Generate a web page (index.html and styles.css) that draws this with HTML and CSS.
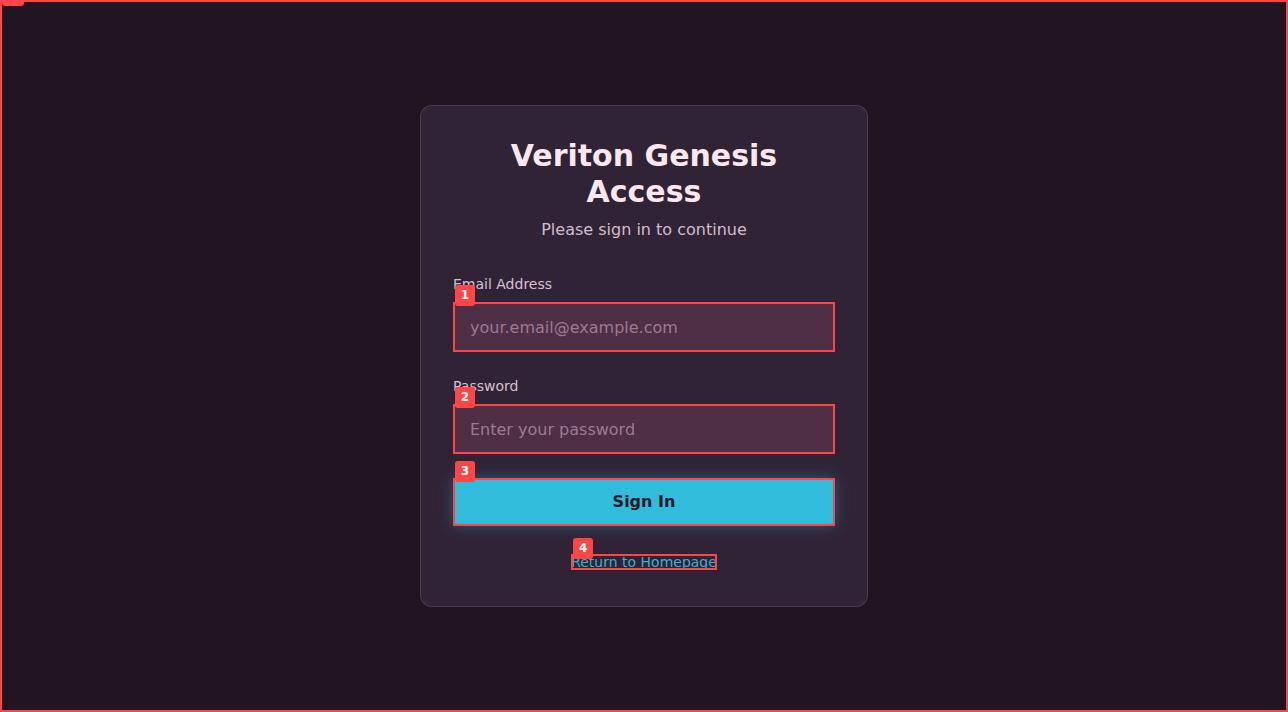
FILE: index.html
```html
<!DOCTYPE html>
<html lang="en">
<head>
<meta charset="utf-8">
<title>Veriton Genesis Access</title>
<link rel="stylesheet" href="styles.css">
</head>
<body>
<div class="page-frame"><span class="badge badge-page"></span></div>
<main class="screen">
  <section class="card">
    <header class="card-header">
      <h1 class="title">Veriton Genesis Access</h1>
      <p class="subtitle">Please sign in to continue</p>
    </header>
    <form class="form">
      <div class="field">
        <label class="label" for="email">Email Address</label>
        <div class="control">
          <span class="badge">1</span>
          <input class="input marked" id="email" type="email" placeholder="your.email@example.com">
        </div>
      </div>
      <div class="field">
        <label class="label" for="password">Password</label>
        <div class="control">
          <span class="badge">2</span>
          <input class="input marked" id="password" type="password" placeholder="Enter your password">
        </div>
      </div>
      <div class="control">
        <span class="badge">3</span>
        <button class="button marked" type="button">Sign In</button>
      </div>
    </form>
    <div class="footer">
      <span class="link-wrap"><span class="badge badge-link">4</span><a class="link marked" href="#">Return to Homepage</a></span>
    </div>
  </section>
</main>
</body>
</html>
```
FILE: styles.css
```css
* { box-sizing: border-box; }
html, body { margin: 0; padding: 0; }
body {
  background: #221420;
  font-family: "DejaVu Sans", "Liberation Sans", sans-serif;
  color: #f9e6ec;
  overflow: hidden;
}
.page-frame {
  position: fixed;
  inset: 0;
  border: 2px solid #ff4646;
  pointer-events: none;
  z-index: 10;
}
.screen {
  height: 100vh;
  display: flex;
  align-items: center;
  justify-content: center;
}
.card {
  width: 448px;
  background: #312336;
  border: 1px solid rgba(255, 255, 255, 0.12);
  border-radius: 12px;
  padding: 32px;
}
.card-header { text-align: center; margin-bottom: 32px; }
.title {
  margin: 0;
  font-size: 30px;
  line-height: 36px;
  font-weight: bold;
  color: #fbe8ee;
  padding: 0 20px;
}
.subtitle {
  margin: 8px 0 0;
  font-size: 16px;
  line-height: 24px;
  color: #d0bccb;
}
.form { margin: 0; }
.field { margin-bottom: 24px; }
.label {
  display: block;
  font-size: 14px;
  line-height: 20px;
  color: #d4c0cf;
  margin-bottom: 8px;
}
.control { position: relative; }
.input {
  display: block;
  width: 100%;
  height: 50px;
  padding: 12px 16px;
  font-family: inherit;
  font-size: 16px;
  line-height: 24px;
  color: #f9e6ec;
  background: #4e2f45;
  border: 1px solid #5a3a50;
  border-radius: 6px;
}
.input::placeholder { color: #9c7b92; }
.button {
  display: block;
  width: 100%;
  height: 48px;
  padding: 12px;
  font-family: inherit;
  font-size: 16px;
  line-height: 24px;
  font-weight: bold;
  color: #2b1a27;
  background: #31bcdc;
  border: none;
  border-radius: 6px;
  box-shadow: 0 0 14px rgba(49, 188, 220, 0.35);
}
.footer {
  margin-top: 24px;
  text-align: center;
  font-size: 14px;
  line-height: 24px;
}
.link-wrap { position: relative; }
.link { color: #2eb4d4; text-decoration: underline; }
.marked {
  outline: 2px solid #ff4646;
  outline-offset: -2px;
  border-radius: 0;
}
.badge {
  position: absolute;
  top: -17px;
  left: 2px;
  width: 20px;
  height: 21px;
  border-radius: 3px;
  background: #ff4646;
  color: #ffffff;
  font-size: 12px;
  line-height: 21px;
  font-weight: bold;
  text-align: center;
  z-index: 5;
}
.badge-link { top: -16px; left: 2px; }
.badge-page { top: -17px; left: 0; width: 22px; }
```
